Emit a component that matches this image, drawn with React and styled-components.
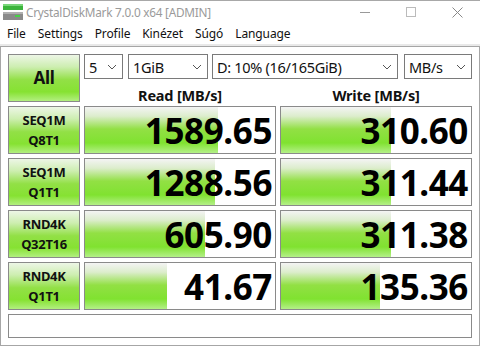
import React from 'react';
import styled, { createGlobalStyle } from 'styled-components';

const GlobalStyle = createGlobalStyle`
    html, body {
        margin: 0;
        padding: 0;
        background: #ffffff;
    }
    body {
        font-family: "Noto Sans", "Open Sans", sans-serif;
    }
`;

const Window = styled.div`
    width: 480px;
    height: 347px;
    display: flex;
    flex-direction: column;
    box-sizing: border-box;
    border-top: 1px solid #a8a8a8;
    background: #fff;
`;

const TitleBar = styled.div`
    height: 22px;
    display: flex;
    align-items: center;
    padding-left: 3px;
    gap: 3px;

    .title {
        color: #9a9a9a;
        font-size: 11.8px;
        letter-spacing: -0.25px;
    }

    .controls {
        margin-left: auto;
        display: flex;
        align-items: center;
    }
`;

const Control = styled.div`
    width: 46px;
    height: 22px;
    display: flex;
    align-items: center;
    justify-content: center;
`;

const MenuBar = styled.div`
    height: 21px;
    display: flex;
    align-items: center;
    padding-left: 1px;
    border-bottom: 2px solid #e9e9e9;

    span {
        font-size: 12px;
        color: #111;
        padding: 0 6px;
        letter-spacing: -0.1px;
    }
`;

const Client = styled.div`
    flex: 1;
    margin-bottom: 1px;
    border: 1px solid #a6a6a6;
    padding: 7px;
    display: grid;
    grid-template-columns: 72px 192px 192px;
    grid-template-rows: 48px repeat(4, 48px) 24px;
    gap: 4px;
    box-sizing: border-box;
`;

const GreenButton = styled.div`
    box-sizing: border-box;
    border: 1px solid #8a8a8a;
    background: linear-gradient(#edf6e6 0%, #cdeeb0 26%, #92e046 54%, #86e232 80%, #b2ef80 100%);
    display: flex;
    flex-direction: column;
    align-items: center;
    justify-content: center;
    font-weight: bold;
    color: #111;
    font-size: ${p => (p.$big ? '17px' : '13px')};
    line-height: 20px;
    letter-spacing: -0.3px;
`;

const TopControls = styled.div`
    grid-column: 2 / 4;
    display: flex;
    flex-direction: column;
`;

const Selects = styled.div`
    display: flex;
    height: 25px;
`;

const Select = styled.div`
    box-sizing: border-box;
    width: ${p => p.$w}px;
    margin-right: ${p => p.$mr || 0}px;
    height: 25px;
    border: 1px solid #7a7a7a;
    background: #fff;
    display: flex;
    align-items: center;
    padding: 0 5px 0 4px;
    font-size: 14.5px;
    color: #111;
    letter-spacing: -0.3px;
    white-space: nowrap;

    svg {
        margin-left: auto;
        flex-shrink: 0;
    }
`;

const Headers = styled.div`
    flex: 1;
    display: grid;
    grid-template-columns: 192px 192px;
    gap: 4px;
    align-items: center;
    padding-top: 6px;

    span {
        text-align: center;
        font-weight: bold;
        font-size: 14.5px;
        color: #111;
        letter-spacing: -0.2px;
    }
`;

const Bar = styled.div`
    box-sizing: border-box;
    border: 1px solid #8a8a8a;
    background: #fff;
    position: relative;
    display: flex;
    align-items: center;
    justify-content: flex-end;
    padding-right: 3px;
    overflow: hidden;

    .fill {
        position: absolute;
        left: 0;
        top: 0;
        bottom: 0;
        background: linear-gradient(#f4f4f4 0%, #dcedcc 20%, #92e044 48%, #80e230 78%, #b4f088 100%);
    }

    .value {
        position: relative;
        font-weight: bold;
        font-size: 35px;
        line-height: 1;
        color: #000;
        letter-spacing: -0.4px;
    }
`;

const Comment = styled.div`
    grid-column: 1 / 4;
    box-sizing: border-box;
    border: 1px solid #8a8a8a;
    background: #fff;
`;

const rows = [
    { l1: 'SEQ1M', l2: 'Q8T1', read: 1589.65, write: 310.60 },
    { l1: 'SEQ1M', l2: 'Q1T1', read: 1288.56, write: 311.44 },
    { l1: 'RND4K', l2: 'Q32T16', read: 605.90, write: 311.38 },
    { l1: 'RND4K', l2: 'Q1T1', read: 41.67, write: 135.36 },
];

// log scale bar, like the app itself
const barWidth = v => Math.max(0, Math.min(190, 29.7 + 32.3 * Math.log10(v)));

const Chevron = () => (
    <svg width="10" height="6" viewBox="0 0 10 6">
        <path d="M1 1 L5 5 L9 1" fill="none" stroke="#555" strokeWidth="1" />
    </svg>
);

const AppIcon = () => (
    <svg width="20" height="18" viewBox="0 0 20 18">
        <rect x="0" y="1" width="20" height="6" fill="#3cb43c" />
        <rect x="0" y="1" width="20" height="2" fill="#7ad67a" />
        <rect x="0" y="9" width="20" height="8" fill="#8a8a8a" />
        <rect x="0" y="9" width="20" height="2" fill="#b0b0b0" />
        <rect x="12" y="12" width="5" height="2" fill="#46d046" />
    </svg>
);

const Value = ({ v }) => (
    <Bar>
        <div className="fill" style={{ width: barWidth(v) + 'px' }} />
        <span className="value">{v.toFixed(2)}</span>
    </Bar>
);

const App = () => {
    return (
        <Window>
            <GlobalStyle />
            <TitleBar>
                <AppIcon />
                <span className="title">CrystalDiskMark 7.0.0 x64 [ADMIN]</span>
                <div className="controls">
                    <Control>
                        <svg width="11" height="11" viewBox="0 0 11 11">
                            <path d="M0 5.5 H10" stroke="#999" strokeWidth="1" />
                        </svg>
                    </Control>
                    <Control>
                        <svg width="11" height="11" viewBox="0 0 11 11">
                            <rect x="0.5" y="0.5" width="9" height="9" fill="none" stroke="#bbb" strokeWidth="1" />
                        </svg>
                    </Control>
                    <Control>
                        <svg width="11" height="11" viewBox="0 0 11 11">
                            <path d="M0.5 0.5 L10.5 10.5 M10.5 0.5 L0.5 10.5" stroke="#888" strokeWidth="1" />
                        </svg>
                    </Control>
                </div>
            </TitleBar>
            <MenuBar>
                <span>File</span>
                <span>Settings</span>
                <span>Profile</span>
                <span>Kinézet</span>
                <span>Súgó</span>
                <span>Language</span>
            </MenuBar>
            <Client>
                <GreenButton $big>All</GreenButton>
                <TopControls>
                    <Selects>
                        <Select $w={39} $mr={5}>5<Chevron /></Select>
                        <Select $w={80} $mr={4}>1GiB<Chevron /></Select>
                        <Select $w={186} $mr={6}>D: 10% (16/165GiB)<Chevron /></Select>
                        <Select $w={68}>MB/s<Chevron /></Select>
                    </Selects>
                    <Headers>
                        <span>Read [MB/s]</span>
                        <span>Write [MB/s]</span>
                    </Headers>
                </TopControls>
                {rows.map(r => (
                    <React.Fragment key={r.l1 + r.l2}>
                        <GreenButton>
                            <span>{r.l1}</span>
                            <span>{r.l2}</span>
                        </GreenButton>
                        <Value v={r.read} />
                        <Value v={r.write} />
                    </React.Fragment>
                ))}
                <Comment />
            </Client>
        </Window>
    );
};

export default App;
